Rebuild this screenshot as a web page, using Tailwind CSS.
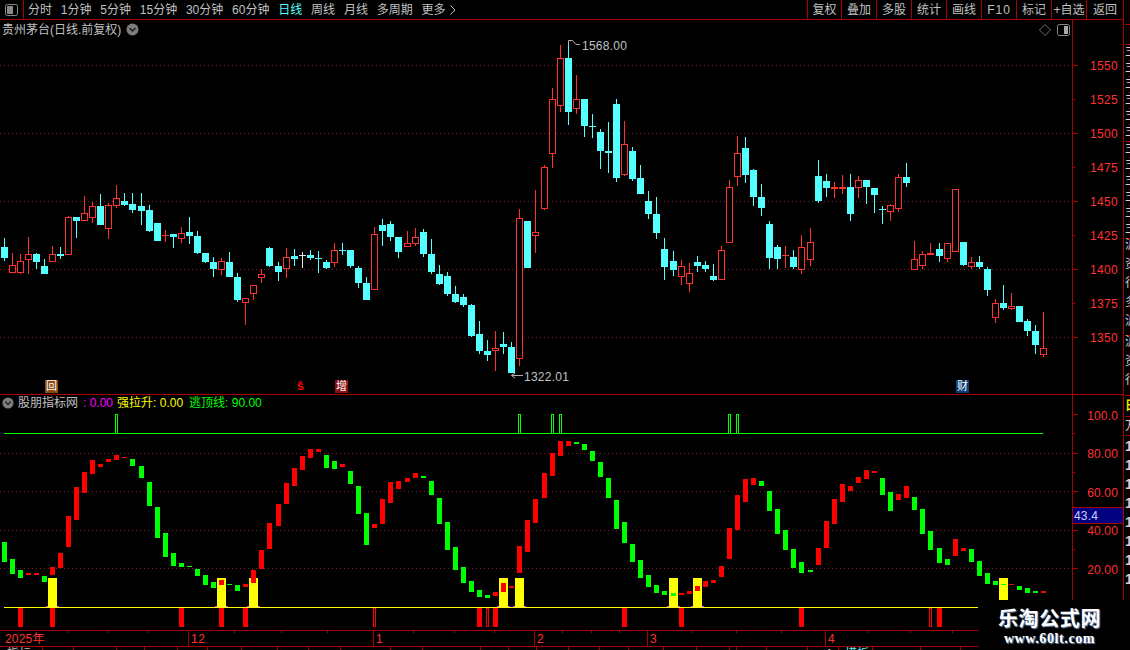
<!DOCTYPE html>
<html lang="zh">
<head>
    <meta charset="UTF-8">
    <title>贵州茅台</title>
    <script src="https://cdn.jsdelivr.net/npm/@tailwindcss/browser@4"></script>
</head>
<body class="bg-black">
<div class="relative flex w-[1130px] h-[650px] overflow-hidden bg-black text-[12px] leading-none text-[#c0c0c0] font-['Liberation_Sans','Noto_Sans_CJK_SC',sans-serif]">

    <div class="flex flex-col w-[1123px] shrink-0">
        <!-- toolbar -->
        <div class="flex h-[20px] shrink-0 items-stretch border-b border-[#aa0000]">
            <div class="flex w-[24px] shrink-0 items-center justify-center border-r border-[#aa0000]">
                <svg width="13" height="12" viewBox="0 0 13 12"><rect x="0.5" y="0.5" width="12" height="11" rx="2" fill="none" stroke="#8a8a8a"/><rect x="2" y="2" width="6" height="8" fill="#8a8a8a"/></svg>
            </div>
            <nav class="flex items-center gap-[8.8px] pl-[4px]">
                <span>分时</span><span>1分钟</span><span>5分钟</span><span>15分钟</span><span>30分钟</span><span>60分钟</span>
                <span class="text-[#54ffff]">日线</span><span>周线</span><span>月线</span><span>多周期</span>
                <span class="flex items-center gap-[4px]">更多
                    <svg width="6" height="10" viewBox="0 0 6 10"><path d="M0.5 0.5 L5 5 L0.5 9.5" fill="none" stroke="#c0c0c0"/></svg>
                </span>
            </nav>
            <div class="ml-auto flex">
                <span class="flex w-[34px] items-center justify-center border-l border-[#aa0000]">复权</span>
                <span class="flex w-[35px] items-center justify-center border-l border-[#aa0000]">叠加</span>
                <span class="flex w-[35px] items-center justify-center border-l border-[#aa0000]">多股</span>
                <span class="flex w-[35px] items-center justify-center border-l border-[#aa0000]">统计</span>
                <span class="flex w-[35px] items-center justify-center border-l border-[#aa0000]">画线</span>
                <span class="flex w-[35px] items-center justify-center border-l border-[#aa0000] tracking-[1px]">F10</span>
                <span class="flex w-[35px] items-center justify-center border-l border-[#aa0000]">标记</span>
                <span class="flex w-[35px] items-center justify-center border-l border-[#aa0000]">+自选</span>
                <span class="flex w-[37px] items-center justify-center border-l border-[#aa0000]">返回</span>
            </div>
        </div>

        <!-- price pane -->
        <div class="flex h-[375px] shrink-0 border-b border-[#aa0000]">
            <div class="relative w-[1072px] shrink-0">
                <svg id="priceChart" class="block" width="1072" height="374" viewBox="0 20 1072 374" shape-rendering="crispEdges"></svg>
                <div class="absolute left-[2px] top-[3px] flex items-center gap-[5px]">
                    <span>贵州茅台(日线.前复权)</span>
                    <svg width="13" height="13" viewBox="0 0 13 13"><circle cx="6.5" cy="6.5" r="6" fill="#7c7c7c"/><path d="M3.5 5 L6.5 8 L9.5 5" fill="none" stroke="#1a1a1a" stroke-width="1.5"/></svg>
                </div>
                <svg class="absolute left-[1039px] top-[4px]" width="12" height="12" viewBox="0 0 12 12"><path d="M6 0.5 L11.5 6 L6 11.5 L0.5 6 Z" fill="none" stroke="#6e6e6e"/></svg>
                <svg class="absolute left-[1057px] top-[4px]" width="13" height="12" viewBox="0 0 13 12"><rect x="0.5" y="0.5" width="12" height="11" rx="2" fill="none" stroke="#8a8a8a"/><rect x="7" y="2" width="4" height="8" fill="#a8a8a8"/></svg>
                <span class="absolute left-[582px] top-[20px] tracking-[0.25px]">1568.00</span>
                <span class="absolute left-[524px] top-[351px] tracking-[0.25px]">1322.01</span>
                <span class="absolute left-[45px] top-[360px] flex h-[13px] w-[13px] items-center justify-center bg-[#8a4a10] text-[11px] text-white">回</span>
                <span class="absolute left-[297px] top-[360px] text-[12px] font-bold text-[#ff0000]">ŝ</span>
                <span class="absolute left-[335px] top-[360px] flex h-[13px] w-[13px] items-center justify-center bg-[#8a0f0f] text-[11px] text-white">增</span>
                <span class="absolute left-[956px] top-[360px] flex h-[13px] w-[13px] items-center justify-center bg-[#0a3a70] text-[11px] text-white">财</span>
            </div>
            <div class="flex w-[51px] shrink-0 flex-col border-l border-[#aa0000] pt-[29px] pr-[5px] text-[#ff3232] tracking-[0.3px]">
                <div class="flex h-[34px] items-center justify-between"><i class="-mt-[2px] h-px w-[5px] bg-[#aa0000]"></i>1550</div>
                <div class="flex h-[34px] items-center justify-between"><i class="-mt-[2px] h-px w-[2px] bg-[#aa0000]"></i>1525</div>
                <div class="flex h-[34px] items-center justify-between"><i class="-mt-[2px] h-px w-[5px] bg-[#aa0000]"></i>1500</div>
                <div class="flex h-[34px] items-center justify-between"><i class="-mt-[2px] h-px w-[2px] bg-[#aa0000]"></i>1475</div>
                <div class="flex h-[34px] items-center justify-between"><i class="-mt-[2px] h-px w-[5px] bg-[#aa0000]"></i>1450</div>
                <div class="flex h-[34px] items-center justify-between"><i class="-mt-[2px] h-px w-[2px] bg-[#aa0000]"></i>1425</div>
                <div class="flex h-[34px] items-center justify-between"><i class="-mt-[2px] h-px w-[5px] bg-[#aa0000]"></i>1400</div>
                <div class="flex h-[34px] items-center justify-between"><i class="-mt-[2px] h-px w-[2px] bg-[#aa0000]"></i>1375</div>
                <div class="flex h-[34px] items-center justify-between"><i class="-mt-[2px] h-px w-[5px] bg-[#aa0000]"></i>1350</div>
            </div>
        </div>

        <!-- indicator pane -->
        <div class="flex h-[236px] shrink-0 border-b border-[#aa0000]">
            <div class="relative w-[1072px] shrink-0">
                <svg id="indicatorChart" class="block" width="1072" height="235" viewBox="0 395 1072 235" shape-rendering="crispEdges"></svg>
                <div class="absolute left-[2px] top-[2px] flex items-center">
                    <svg class="mr-[4px]" width="12" height="12" viewBox="0 0 13 13"><circle cx="6.5" cy="6.5" r="6" fill="#7c7c7c"/><path d="M3.5 5 L6.5 8 L9.5 5" fill="none" stroke="#1a1a1a" stroke-width="1.5"/></svg>
                    <span>股朋指标网</span>
                    <span class="ml-[5px] text-[#ff00ff]">: 0.00</span>
                    <span class="ml-[4px] text-[#ffff00]">强拉升: 0.00</span>
                    <span class="ml-[6px] text-[#00ff00]">逃顶线: 90.00</span>
                </div>
            </div>
            <div class="relative flex w-[51px] shrink-0 flex-col border-l border-[#aa0000] pt-[11px] pr-[5px] text-[#ff3232] tracking-[0.15px]">
                <div class="flex h-[19px] items-center justify-between"><i class="-mt-[2px] h-px w-[5px] bg-[#aa0000]"></i>100.0</div>
                <div class="flex h-[19.5px] items-center"><i class="-mt-[2px] h-px w-[2px] bg-[#aa0000]"></i></div>
                <div class="flex h-[19px] items-center justify-between"><i class="-mt-[2px] h-px w-[5px] bg-[#aa0000]"></i>80.00</div>
                <div class="flex h-[19.5px] items-center"><i class="-mt-[2px] h-px w-[2px] bg-[#aa0000]"></i></div>
                <div class="flex h-[19px] items-center justify-between"><i class="-mt-[2px] h-px w-[5px] bg-[#aa0000]"></i>60.00</div>
                <div class="flex h-[19.5px] items-center"><i class="-mt-[2px] h-px w-[2px] bg-[#aa0000]"></i></div>
                <div class="flex h-[19px] items-center justify-between"><i class="-mt-[2px] h-px w-[5px] bg-[#aa0000]"></i>40.00</div>
                <div class="flex h-[19.5px] items-center"><i class="-mt-[2px] h-px w-[2px] bg-[#aa0000]"></i></div>
                <div class="flex h-[19px] items-center justify-between"><i class="-mt-[2px] h-px w-[5px] bg-[#aa0000]"></i>20.00</div>
                <span class="absolute left-0 top-[112px] flex h-[17px] w-[50px] items-center border-y border-[#aa0000] bg-[#000080] pl-px text-[#d0d0ff]">43.4</span>
            </div>
        </div>

        <!-- date axis -->
        <div class="relative flex h-[16px] shrink-0 items-stretch border-b border-[#aa0000] text-[#ff3232]">
            <span class="flex w-[188px] items-center pl-[5px] tracking-[0.2px]">2025年</span>
            <span class="flex w-[185px] items-center border-l border-[#aa0000] pl-[2px] tracking-[0.5px]">12</span>
            <span class="flex w-[161px] items-center border-l border-[#aa0000] pl-[2px]">1</span>
            <span class="flex w-[113px] items-center border-l border-[#aa0000] pl-[2px]">2</span>
            <span class="flex w-[178px] items-center border-l border-[#aa0000] pl-[2px]">3</span>
            <span class="flex w-[153px] items-center border-l border-[#aa0000] pl-[2px]">4</span>
            <svg id="dateTicks" class="absolute left-0 top-0" width="978" height="3" shape-rendering="crispEdges"></svg>
        </div>

        <!-- clipped bottom row -->
        <div class="relative h-[3px] overflow-hidden">
            <svg id="bottomTicks" class="absolute left-0 top-0" width="978" height="3" shape-rendering="crispEdges"></svg>
            <span class="absolute left-[7px] top-px">指标</span>
            <span class="absolute left-[826px] top-px">1</span>
            <span class="absolute left-[845px] top-px text-[#54ffff]">模板</span>
        </div>
    </div>

    <!-- cut-off side list -->
    <div class="flex w-[7px] shrink-0 flex-col overflow-hidden border-l border-[#aa0000] pl-px font-bold text-[#d0d0d0]">
        <div class="h-[25px] shrink-0 border-b border-[#aa0000]"></div>
        <div class="h-[20px] shrink-0 border-b border-[#aa0000]"></div>
        <div class="flex h-[97px] shrink-0 flex-col border-b border-[#aa0000] text-[12px] font-normal"><b class="font-normal h-[16px]">主</b><b class="font-normal h-[16px]">主</b><b class="font-normal h-[16px]">主</b><b class="font-normal h-[16px]">主</b><b class="font-normal h-[16px]">主</b><b class="font-normal h-[16px]">主</b></div>
        <div class="flex h-[97px] shrink-0 flex-col border-b border-[#aa0000] text-[12px] font-normal"><b class="font-normal h-[16px]">主</b><b class="font-normal h-[16px]">主</b><b class="font-normal h-[16px]">主</b><b class="font-normal h-[16px]">主</b><b class="font-normal h-[16px]">主</b><b class="font-normal h-[16px]">主</b></div>
        <div class="flex h-[97px] shrink-0 flex-col border-b border-[#aa0000] text-[12px] font-normal"><b class="font-normal h-[19px]">沪</b><b class="font-normal h-[19px]">资</b><b class="font-normal h-[19px]">行</b><b class="font-normal h-[19px]">多</b><b class="font-normal h-[19px]">沪</b></div>
        <div class="flex h-[60px] shrink-0 flex-col border-b border-[#aa0000] text-[12px] font-normal"><b class="font-normal h-[19px]">沪</b><b class="font-normal h-[19px]">资</b><b class="font-normal h-[19px]">行</b></div>
        <div class="h-[21px] shrink-0 border-b border-[#aa0000] pt-[4px] text-[#e8e800]">日</div>
        <div class="h-[19px] shrink-0 border-b border-[#aa0000] pt-[3px] font-normal">万</div>
        <div class="flex flex-col pt-[3px] text-[14px]"><b class="h-[19px]">1</b><b class="h-[19px]">1</b><b class="h-[19px]">1</b><b class="h-[19px]">1</b><b class="h-[19px]">1</b><b class="h-[19px]">1</b><b class="h-[19px]">1</b><b class="h-[19px]">1</b></div>
    </div>

    <!-- watermark logo over the corner -->
    <div class="absolute left-[978px] top-[600px] flex h-[50px] w-[152px] flex-col items-center bg-black pr-[9px] pt-[7px] font-bold text-white">
        <span class="text-[20px] leading-[22px] tracking-[0.6px] font-['Noto_Sans_CJK_SC',sans-serif] [text-shadow:1px_1px_1px_#8090b0]">乐淘公式网</span>
        <span class="mt-[3px] text-[14px] leading-[14px] tracking-[0.6px] font-['Liberation_Serif',serif] [text-shadow:1px_1px_1px_#8090b0]">www.60lt.com</span>
    </div>
</div>

<script>
    const CYAN = '#54ffff', RED = '#ff3232', WHITE = '#e8e8e8';
    const DOT = '#7d1c1c';

    // bar index -> left pixel of its centre column, the spacing is a little over 8px
    function barX(i) {
        const extra = i < 1 ? 0 : Math.floor((i - 0.3) / 16.5);
        return 4 + 8 * i + extra;
    }

    function rect(x, y, w, h, fill) {
        return `<rect x="${x}" y="${y}" width="${w}" height="${h}" fill="${fill}"/>`;
    }

    // candles as [high, bodyTop, bodyBottom, low, type], read off 3x crops with the crop's top y
    const candleGroups = [
        [170, [
            [205,231,264,272,'c'],[249,286,308,308,'r'],[252,274,308,311,'r'],[201,253,269,311,'r'],[249,252,276,297,'c'],
            [267,288,312,312,'c'],[228,253,275,275,'r'],[231,252,258,267,'c'],[138,142,254,254,'r'],[141,141,153,204,'c'],
            [78,130,152,152,'r'],[96,109,143,159,'r'],[72,108,165,165,'c'],[99,106,176,207,'r'],[45,85,107,113,'r'],
            [69,93,105,108,'c'],[69,102,120,129,'c'],[69,108,123,165,'c'],[105,120,183,186,'c'],[159,159,213,213,'c'],
            [180,195,198,216,'r'],[192,192,201,234,'c'],[171,190,206,219,'r'],[141,186,198,222,'c'],[183,198,249,252,'c'],
            [249,249,276,279,'c'],[261,276,297,321,'c'],[264,274,299,315,'r'],[246,276,321,321,'c'],[309,321,390,396,'c'],
            [385,385,398,465,'r'],[346,346,371,390,'r'],[297,313,323,339,'r'],[231,234,288,291,'c'],
            [276,288,306,333,'c'],[234,262,297,324,'r'],[237,258,267,288,'c'],[246,254,257,294,'w'],[240,255,264,270,'c'],
            [243,264,267,309,'c'],[270,276,294,297,'c'],[220,241,278,291,'r'],[219,240,243,255,'c'],[240,240,288,294,'c'],
            [288,294,339,354,'c'],[321,339,390,390,'c'],[171,193,359,359,'r'],[147,165,183,228,'c'],[153,162,201,213,'c'],
            [201,201,246,264,'c'],[183,220,230,230,'r'],[174,202,221,228,'r'],[177,186,252,261,'c'],[207,252,306,312,'c'],
            [285,312,342,345,'c'],[306,318,372,378,'c'],[348,372,396,399,'c'],[372,381,405,411,'c'],[402,405,498,501,'c'],
            [453,492,543,552,'c'],[510,543,555,573,'c'],[483,534,542,603,'r'],[486,522,531,552,'c'],[516,531,609,609,'c'],
            [117,145,566,588,'r'],[153,153,294,294,'c'],[60,187,197,249,'r']
        ]],
        [35, [
            [390,397,521,525,'r'],[159,193,356,399,'r'],[30,70,212,231,'r'],[20,69,231,270,'c'],[120,193,221,237,'r'],
            [192,192,273,306,'c'],[237,272,276,309,'c'],[282,291,348,402,'c'],[261,348,354,414,'c'],[192,207,429,441,'c'],
            [258,328,419,423,'r'],[336,348,432,438,'c'],[390,429,477,477,'c'],[468,498,537,552,'c'],[486,537,594,612,'c'],
            [609,642,696,735,'c'],[648,678,705,723,'c'],[675,694,725,750,'r'],[684,715,746,771,'r'],[663,681,693,711,'c'],
            [678,690,702,711,'c'],[687,723,735,738,'c'],[633,646,734,734,'r'],[435,457,623,623,'r'],[303,355,425,453,'r'],
            [306,339,420,444,'c'],[402,405,486,513,'c'],[447,486,519,543,'c'],[558,567,669,702,'c']
        ]],
        [130, [
            [345,351,387,417,'c'],[348,375,378,414,'r'],[360,381,411,417,'c'],[315,352,419,432,'r'],[294,337,389,408,'r'],
            [90,138,213,219,'c'],[132,153,174,201,'c'],[156,171,177,204,'r'],[135,171,177,192,'r'],[132,171,252,273,'c'],
            [138,151,173,204,'r'],[150,150,171,222,'c'],[174,174,195,249,'c'],[228,237,240,282,'c'],[222,226,245,273,'r'],
            [132,142,236,246,'r'],[99,141,159,171,'c'],[333,388,419,419,'r'],[363,373,407,417,'r'],[339,370,375,375,'r'],
            [339,357,378,396,'c'],[340,340,386,396,'r'],[178,178,365,365,'r'],[336,336,405,408,'c'],[381,397,411,417,'r'],
            [378,396,411,417,'c'],[411,417,480,498,'c'],[507,520,563,579,'r'],[465,519,534,540,'c'],[489,529,536,540,'r'],
            [528,528,576,576,'c'],[567,573,603,618,'c'],[585,603,645,672,'c'],[546,655,674,681,'r']
        ]]
    ];

    // indicator bars as [top, bottom, colour]
    const barGroups = [
        [375, [
            [501,561,'g'],[552,597,'g'],[585,609,'g'],[594,600,'r'],[594,600,'r'],[603,621,'g'],[576,600,'r'],[534,579,'r'],
            [423,516,'r'],[336,435,'r'],[291,354,'r'],[255,297,'r'],[267,276,'r'],[252,261,'r'],[240,255,'r'],[246,249,'r'],
            [252,273,'g'],[273,309,'g'],[321,393,'g'],[396,489,'g'],[474,546,'g'],[534,573,'g'],[564,576,'g'],[573,576,'g'],
            [582,603,'g'],[600,630,'g'],[621,639,'g'],[615,630,'r'],[627,630,'g'],[630,648,'g'],[627,636,'r'],[585,624,'r'],
            [525,582,'r'],[444,522,'r'],[387,453,'r'],[324,387,'r'],[279,333,'r'],[243,285,'r'],[222,249,'r'],[222,231,'r'],
            [240,279,'g'],[258,282,'g'],[267,276,'r'],[288,327,'g'],[333,417,'g'],[414,510,'g']
        ]],
        [395, [
            [387,399,'r'],[312,387,'r'],[261,324,'r'],[258,282,'r'],[249,261,'r'],[234,249,'r'],[243,249,'g'],[258,300,'g'],
            [309,387,'g'],[381,465,'g'],[456,525,'g'],[516,564,'g'],[558,591,'g'],[585,606,'g'],[600,609,'g'],[591,603,'r'],
            [564,591,'r'],[573,579,'r'],[453,534,'r'],[375,471,'r'],[312,384,'r'],[234,309,'r'],[174,243,'r'],[138,183,'r'],
            [138,153,'r'],[141,147,'g'],[147,165,'g'],[168,198,'g'],[201,246,'g'],[249,309,'g'],[315,402,'g'],[381,444,'g'],
            [447,501,'g'],[495,549,'g'],[540,576,'g'],[570,594,'g'],[588,600,'g'],[594,603,'g'],[594,600,'r'],[588,597,'r'],
            [573,588,'r'],[558,576,'r'],[555,564,'r'],[513,546,'r'],[399,492,'r'],[300,405,'r'],
            [252,321,'r'],[249,270,'r'],[258,273,'g'],[288,348,'g'],[342,417,'g'],[405,465,'g'],[462,519,'g'],[501,534,'g'],
            [525,531,'g'],[459,510,'r'],[378,459,'r'],[312,387,'r'],[267,321,'r'],[273,288,'r'],[246,264,'r'],[225,252,'r'],
            [228,234,'r'],[249,300,'g'],[291,348,'g'],[297,315,'r'],[273,309,'r'],[306,345,'g'],[342,417,'g'],[408,465,'g'],
            [459,504,'g'],[492,510,'g'],[432,483,'r'],[459,468,'r'],[462,501,'g'],[498,543,'g'],[534,567,'g'],[558,570,'g'],
            [567,570,'g'],[567,570,'r'],[573,585,'g'],[579,594,'g'],[588,594,'g'],[588,594,'r']
        ]]
    ];

    function dottedLine(y) {
        return `<line x1="0" x2="1072" y1="${y + 0.5}" y2="${y + 0.5}" stroke="${DOT}" stroke-dasharray="1 3"/>`;
    }

    function drawPrice() {
        let out = [65, 133, 201, 269, 337].map(dottedLine).join('');
        let i = 0;
        candleGroups.forEach(([top, rows]) => {
            rows.forEach(([hi, bodyTop, bodyBot, lo, type]) => {
                const x = barX(i++);
                const y = z => Math.round(top + z / 3);
                const color = type === 'c' ? CYAN : type === 'r' ? RED : WHITE;
                const h = Math.max(1, y(bodyBot) - y(bodyTop));
                out += rect(x, y(hi), 1, Math.max(1, y(lo) - y(hi)), color);
                if (type === 'r' && h > 2) {
                    out += `<rect x="${x - 2.5}" y="${y(bodyTop) + 0.5}" width="6" height="${h - 1}" fill="#000" stroke="${color}"/>`;
                } else {
                    out += rect(x - 3, y(bodyTop), 7, h, color);
                }
            });
        });
        // high / low markers
        out += `<path d="M568.5 46 V40.5 H572.5 L576 44.5 H580" fill="none" stroke="#b0b0b0" shape-rendering="auto"/>`;
        out += `<path d="M523 375.5 H511.5 M515 373 L511.5 375.5 L515 378" fill="none" stroke="#b0b0b0" shape-rendering="auto"/>`;
        document.getElementById('priceChart').innerHTML = out;
    }

    function drawIndicator() {
        let out = [453, 491, 530, 568].map(dottedLine).join('');
        // reference lines
        out += rect(4, 433, 1039, 1, '#00ff00');
        [14, 64, 68, 69, 90, 91].forEach(i => {
            out += `<rect x="${barX(i) - 0.5}" y="414.5" width="2" height="19" fill="none" stroke="#00ff00"/>`;
        });
        // yellow columns
        [6, 27, 31, 62, 64, 83, 86, 124].forEach(i => {
            const x = barX(i);
            out += rect(x - 4, 578, 9, 29, '#ffff00');
            out += rect(x - 6, 606, 2, 1, '#ff40ff') + rect(x + 5, 606, 2, 1, '#ff40ff');
        });
        out += rect(4, 607, 974, 1, '#ffff00');
        // signal bars under the line
        [2, 6, 22, 27, 30, 59, 61, 77, 84, 99, 116].forEach(i => {
            out += rect(barX(i) - 2, 608, 5, 19, '#ff0000');
        });
        [46, 60, 115].forEach(i => {
            out += `<rect x="${barX(i) - 0.5}" y="608.5" width="2" height="18" fill="none" stroke="#ff0000"/>`;
        });
        let i = 0;
        barGroups.forEach(([top, rows]) => {
            rows.forEach(([from, to, c]) => {
                const y1 = Math.round(top + from / 3), y2 = Math.round(top + to / 3);
                out += rect(barX(i++) - 2, y1, 5, Math.max(1, y2 - y1), c === 'g' ? '#00ff00' : '#ff0000');
            });
        });
        document.getElementById('indicatorChart').innerHTML = out;
    }

    function drawTicks() {
        const dateXs = [67,108,148,234,281,327,413,454,494,562,591,619,692,736,781,867,910,952];
        document.getElementById('dateTicks').innerHTML = dateXs.map(x => rect(x, 0, 1, 2, '#aa0000')).join('');
        const bottomXs = [42,73,116,144,177,207,241,277,308,340,390,422,480,508,536,568,599,628,663,696,729,736,766,807,838,872,920,960];
        document.getElementById('bottomTicks').innerHTML = bottomXs.map(x => rect(x, 0, 1, 3, '#aa0000')).join('');
    }

    drawPrice();
    drawIndicator();
    drawTicks();
</script>
</body>
</html>
